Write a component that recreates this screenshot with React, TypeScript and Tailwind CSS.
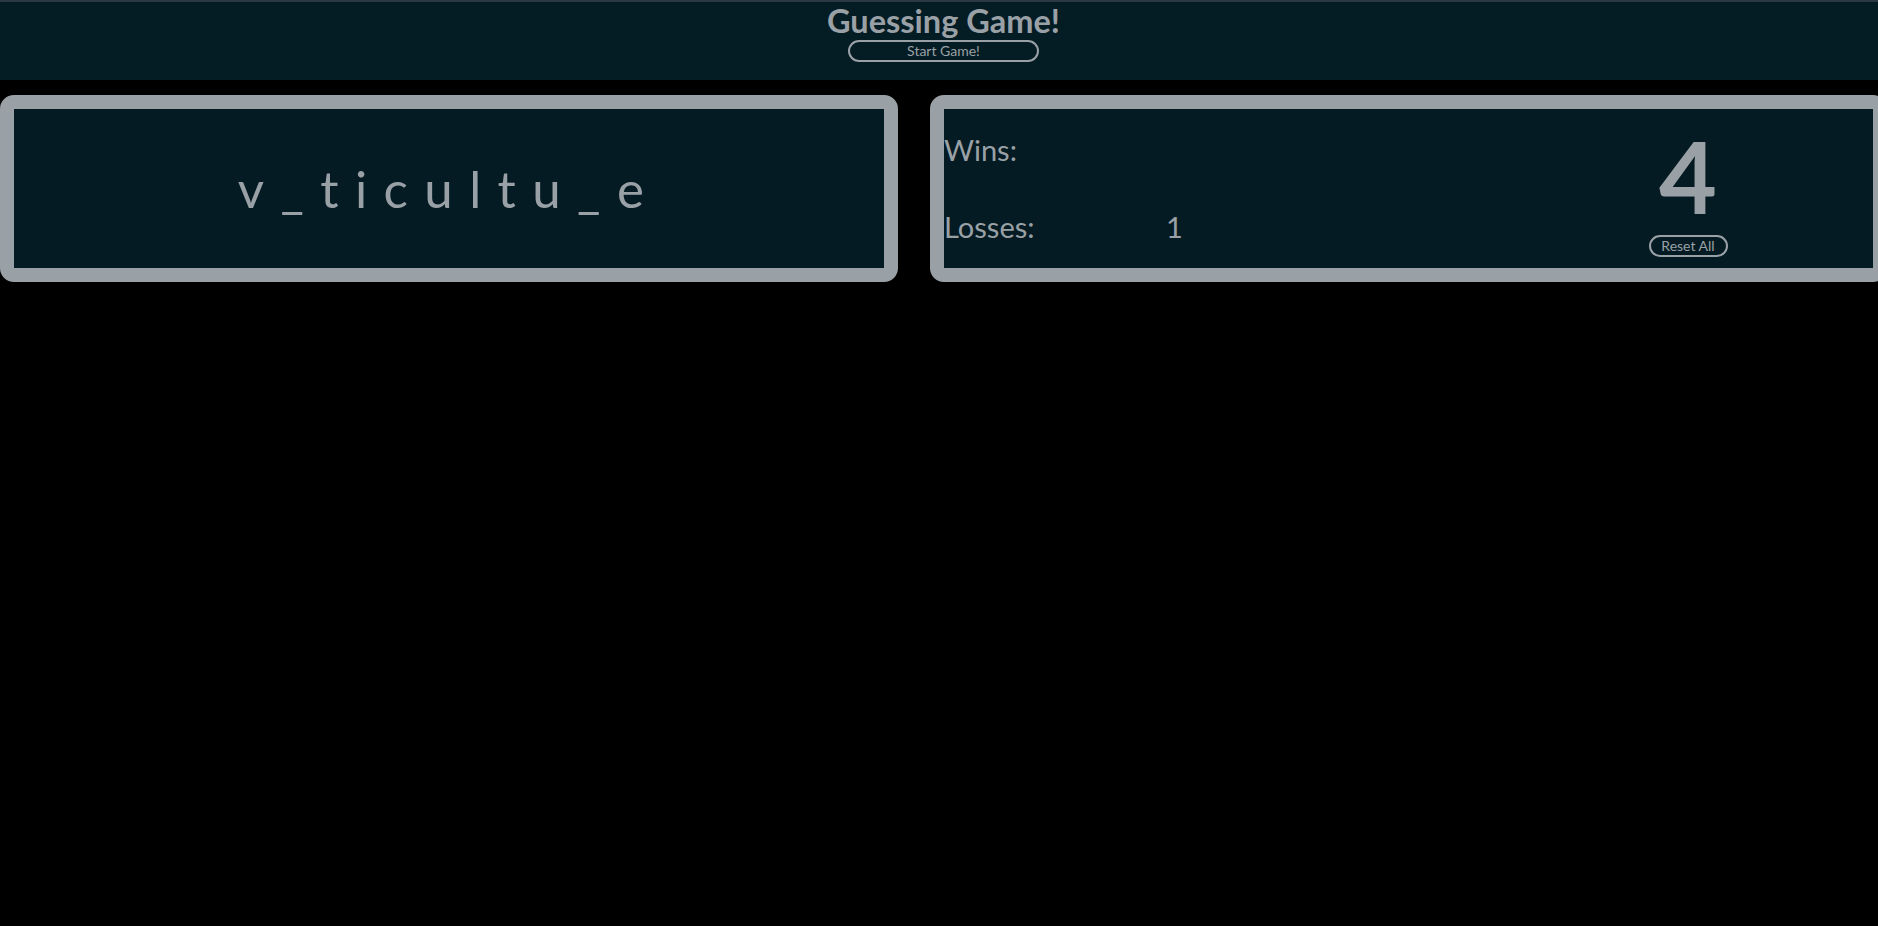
import React from "react";

export default function App() {
  const font = { fontFamily: "Lato, 'Open Sans', sans-serif" };
  return (
    <div className="min-h-screen w-full overflow-hidden bg-black text-[#9aa1a6]" style={font}>
      <header className="w-[1887px] h-[80px] border-t-2 border-[#2b3945] bg-[#041c24] flex flex-col items-center">
        <h1 className="text-[32.5px] font-bold leading-[36px] mt-[1px]">Guessing Game!</h1>
        <button className="mt-[1px] w-[191px] h-[22px] rounded-full border-2 border-[#9aa1a6] bg-[#041c24] text-[14px] leading-[16px] text-[#9aa1a6]">
          Start Game!
        </button>
      </header>
      <main className="flex gap-[32px] pt-[15px] w-[1900px]">
        <section className="w-[898px] h-[187px] shrink-0 rounded-[14px] border-[14px] border-[#9aa1a6] bg-[#041b23] flex items-center justify-center">
          <div className="text-[51px] leading-[60px] tracking-[16.4px] pl-[16px] -ml-[16px]">v_ticultu_e</div>
        </section>
        <section className="w-[957px] h-[187px] shrink-0 rounded-[14px] border-[14px] border-[#9aa1a6] bg-[#041b23] flex">
          <div className="w-[644px] grid grid-cols-[222px_1fr] content-start pt-[23px] gap-y-[41px] text-[29px] leading-[36px]">
            <div>Wins:</div>
            <div></div>
            <div>Losses:</div>
            <div>1</div>
          </div>
          <div className="w-[200px] flex flex-col items-center pt-[16px]">
            <div className="text-[100px] font-bold leading-[100px]">4</div>
            <button className="mt-[10px] w-[79px] h-[22px] rounded-full border-2 border-[#9aa1a6] bg-[#041b23] text-[14px] leading-[16px] text-[#9aa1a6]">
              Reset All
            </button>
          </div>
        </section>
      </main>
    </div>
  );
}
